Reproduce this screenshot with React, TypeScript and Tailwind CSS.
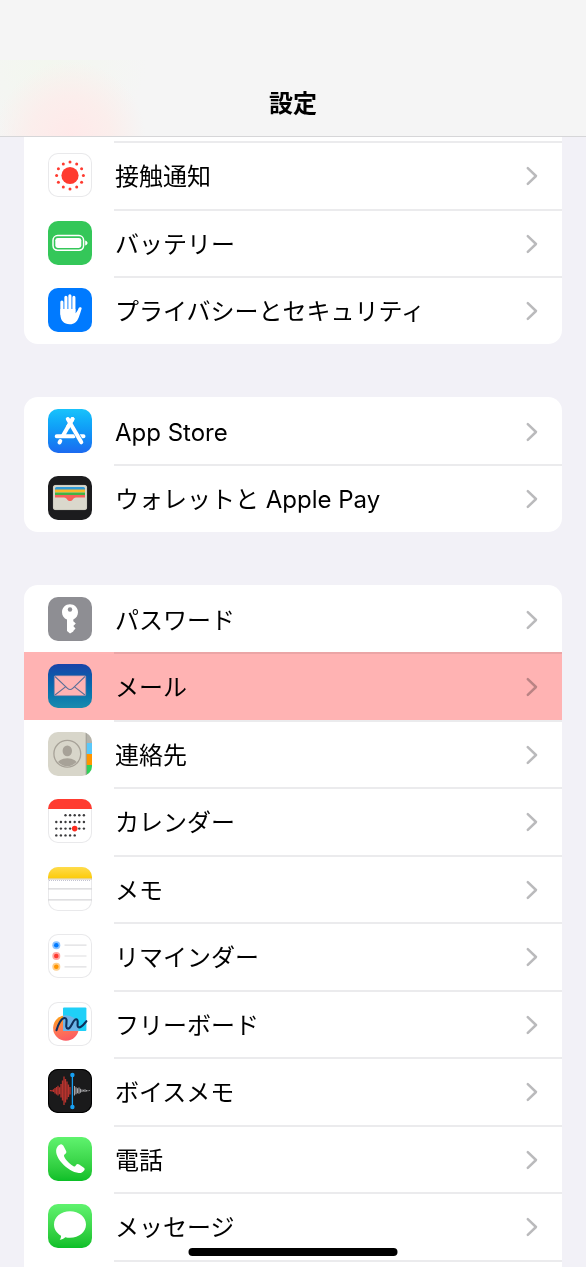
// App.tsx
import React from 'react';

interface SettingsItem {
    label: string;
    icon: React.ReactNode;
    highlighted?: boolean;
}

interface TileProps {
    className: string;
    children: React.ReactNode;
}

const Tile: React.FC<TileProps> = ({ className, children }) => (
    <span className={`block size-11 shrink-0 overflow-hidden rounded-[10px] ${className}`}>
        <svg viewBox="0 0 44 44" className="block size-full" fill="none" aria-hidden="true">
            {children}
        </svg>
    </span>
);

// White tiles get a hairline so they don't vanish on the white card
const OUTLINE = 'bg-white ring-1 ring-inset ring-[#e9e9eb]';

const ExposureIcon = () => (
    <Tile className={OUTLINE}>
        <circle cx="22" cy="22.5" r="8.6" fill="#ff3b30" />
        {Array.from({ length: 12 }, (_, i) => {
            const angle = (i * Math.PI) / 6;
            return (
                <circle
                    key={i}
                    cx={22 + 13.4 * Math.cos(angle)}
                    cy={22.5 + 13.4 * Math.sin(angle)}
                    r="1.5"
                    fill="#ff3b30"
                />
            );
        })}
    </Tile>
);

const BatteryIcon = () => (
    <Tile className="bg-[#34c759]">
        <rect x="5" y="14.6" width="30.6" height="14.6" rx="4.6" stroke="#fff" strokeWidth="1.5" />
        <rect x="7.3" y="16.9" width="26" height="10" rx="2.4" fill="#fff" />
        <path d="M37.2 19.4c1.5.4 2.3 1.4 2.3 2.5s-.8 2.1-2.3 2.5z" fill="#fff" />
    </Tile>
);

const HandIcon = () => (
    <Tile className="bg-[#007aff]">
        <path
            d="M13.9 14v12M17.9 9.2V24M21.9 7.8V24M25.9 9.4V24"
            stroke="#fff"
            strokeWidth="3.1"
            strokeLinecap="round"
        />
        <path
            d="M12.4 21h15v4.2c1.5-1.2 2.4-3 3.2-5 .6-1.4 3.6-1.6 3 .6-.8 2.7-1.7 5.8-2.9 8.6-1.8 4.3-4.200 6.800-8.900 6.800-6 0-9.400-3.900-9.400-9.800z"
            fill="#fff"
        />
    </Tile>
);

const AppStoreIcon = () => (
    <Tile className="bg-linear-to-b from-[#19c3fb] to-[#1c6af0]">
        <g stroke="#fff" strokeWidth="4" strokeLinecap="round">
            <path d="M24.5 10 14.8 27" />
            <path d="M8.7 27.2h17M32 27.2h3.5" />
            <path d="M12.3 32 11.5 33.4" />
        </g>
        <path d="M20 10.2 33.3 33" stroke="#1f93f6" strokeWidth="5.2" />
        <path d="M19.8 10 33.3 33.3" stroke="#fff" strokeWidth="4" strokeLinecap="round" />
        <path d="M24.5 10 20 18" stroke="#fff" strokeWidth="4" strokeLinecap="round" />
    </Tile>
);

const WalletIcon = () => (
    <Tile className="bg-[#1c1c1e]">
        <rect x="5" y="9" width="34" height="25" rx="2.5" fill="#dad8cc" />
        <path d="M7 12.5q0-1.5 1.5-1.5h27q1.5 0 1.5 1.5V14H7z" fill="#2f9bd8" />
        <path d="M7 13.6h30v3H7z" fill="#fcb72a" />
        <path d="M7 16.4h30v3H7z" fill="#41b445" />
        <path d="M7 19.1h30v2.3h-9c-1.8 0-2.5 1-3.2 2-1.4 2-4.2 2-5.6 0-.7-1-1.4-2-3.2-2H7z" fill="#f7605a" />
        <rect x="5.4" y="9.4" width="33.2" height="24.2" rx="2.2" stroke="#c9c7bc" strokeWidth="0.7" />
    </Tile>
);

const KeyIcon = () => (
    <Tile className="bg-[#8e8e93]">
        <path
            d="M22 7.3c4.5 0 8 3.4 8 7.9 0 3.3-1.900 6-4.700 7.200v1.900l2.500 2.300-2.500 2.500 2.200 2.500-2.200 2.500v.5L22 36.600l-3-2.700V22.600c-3-1.100-5-4-5-7.400 0-4.500 3.500-7.900 8-7.900z"
            fill="#fff"
        />
        <circle cx="22" cy="12.5" r="2.2" fill="#8e8e93" />
    </Tile>
);

const MailIcon = () => (
    <Tile className="bg-linear-to-b from-[#1a5ff0] to-[#1ac6f8]">
        <rect x="6.3" y="11.7" width="31.5" height="20" rx="1" fill="#fff" />
        <path
            d="M7 12.5 19.5 24.3c1.6 1.5 3.6 1.5 5.2 0L37 12.5M7 31l10.8-8.4M37 31l-10.8-8.4"
            stroke="#5c9ed8"
            strokeWidth="1.1"
        />
        <rect x="6.3" y="11.7" width="31.5" height="20" rx="1" stroke="#7fb4e8" strokeWidth="0.6" />
    </Tile>
);

const ContactsIcon = () => (
    <Tile className="bg-[#d8d6ca]">
        <clipPath id="contact-avatar">
            <circle cx="19.3" cy="21.8" r="12.3" />
        </clipPath>
        <circle cx="19.3" cy="21.8" r="13.4" stroke="#a7a298" strokeWidth="1.3" />
        <ellipse cx="19.3" cy="18.9" rx="4.7" ry="5.4" fill="#a7a298" />
        <ellipse cx="19.3" cy="33.3" rx="10.5" ry="7" fill="#a7a298" clipPath="url(#contact-avatar)" />
        <path d="M38.5 0H44v11h-5.5z" fill="#b4b2a9" />
        <path d="M38.5 11H44v11h-5.5z" fill="#5ac8fa" />
        <path d="M38.5 22H44v11h-5.5z" fill="#ff9500" />
        <path d="M38.5 33H44v11h-5.5z" fill="#30d158" />
        <path d="M38.2 0v44" stroke="#8d8b82" strokeWidth="0.8" />
    </Tile>
);

const CalendarIcon = () => {
    const rows = [
        { y: 16.2, from: 2, to: 6 },
        { y: 23, from: 0, to: 6 },
        { y: 29.6, from: 0, to: 6 },
        { y: 36.4, from: 0, to: 4 },
    ];

    return (
        <Tile className={OUTLINE}>
            <path d="M0 0h44v10H0z" fill="#ff3b30" />
            {rows.map((row) =>
                Array.from({ length: row.to - row.from + 1 }, (_, i) => (
                    <circle key={`${row.y}-${i}`} cx={8.3 + (row.from + i) * 4.6} cy={row.y} r="1.2" fill="#3a3a3c" />
                ))
            )}
            <circle cx="26.7" cy="29.6" r="2.8" fill="#ff2d20" />
        </Tile>
    );
};

const NotesIcon = () => (
    <Tile className={OUTLINE}>
        <defs>
            <linearGradient id="notes-top" x1="0" y1="0" x2="0" y2="1">
                <stop stopColor="#ffdc4b" />
                <stop offset="1" stopColor="#fccb09" />
            </linearGradient>
        </defs>
        <path d="M0 0h44v11.5H0z" fill="url(#notes-top)" />
        <path d="M0 12h44" stroke="#c9b88a" strokeWidth="0.8" />
        <path d="M1 13.5h42" stroke="#c3c3d2" strokeWidth="1" strokeDasharray="1 1" />
        <path d="M0 21.9h44M0 32.9h44" stroke="#d5d5d7" strokeWidth="1.2" />
    </Tile>
);

const RemindersIcon = () => (
    <Tile className={OUTLINE}>
        {[
            { y: 11.2, color: '#007aff' },
            { y: 22, color: '#ff3b30' },
            { y: 32.8, color: '#ff9500' },
        ].map(({ y, color }) => (
            <g key={color}>
                <circle cx="8.3" cy={y} r="4" fill={color} opacity="0.45" />
                <circle cx="8.3" cy={y} r="2.3" fill={color} />
                <path d={`M16.5 ${y}h22`} stroke="#dedee0" strokeWidth="1.2" />
            </g>
        ))}
    </Tile>
);

const FreeformIcon = () => (
    <Tile className={OUTLINE}>
        <defs>
            <linearGradient id="freeform-ball" x1="0.2" y1="0" x2="0.5" y2="1">
                <stop stopColor="#ffa412" />
                <stop offset="0.5" stopColor="#ff7b52" />
                <stop offset="1" stopColor="#fb5b63" />
            </linearGradient>
            <clipPath id="freeform-square">
                <rect x="15" y="5.5" width="23.4" height="23.5" rx="1" />
            </clipPath>
        </defs>
        <circle cx="17.9" cy="26" r="12.8" fill="url(#freeform-ball)" />
        <rect x="15" y="5.5" width="23.4" height="23.5" rx="1" fill="#1fd0f8" />
        <circle cx="17.9" cy="26" r="12.8" fill="#6db4e8" clipPath="url(#freeform-square)" />
        <path
            d="M8.5 28.2C10 22.5 13.3 16 16.8 16c4.2 0-1 10.6 3.2 10.6 3.5 0 4.8-9.8 8.4-9.3 3.2.5-.7 7.9 2.6 8.1 2.6.1 4.8-3.200 7.400-6.200"
            stroke="#0e2f5c"
            strokeWidth="2.1"
            strokeLinecap="round"
        />
    </Tile>
);

const VoiceMemosIcon = () => (
    <Tile className="bg-[#1a1a1b] ring-1 ring-inset ring-black">
        <path
            d="M2.5 21.1v1.2M4 21v1.6M5.5 20.3v2.8M7 19v5.4M8.5 18v7.6M10 16.8v9.8M11.5 18.2v7M13 15v13.4M14.5 11.5v20M16 7.5v28.5M17.5 10v23.500M19 12.500v18M20.500 15.500v12.500M22 18v7.500"
            stroke="#b8332e"
            strokeWidth="1.3"
        />
        <path
            d="M26.5 17v9.5M28 18.2v7M29.5 19.3v5M31 18.6v6.2M32.5 19.7v4M34 20.4v2.6M35.5 20.8v1.8M37 20.3v2.8M38.5 21v1.4M40 21.2v1M41.5 21.3v.8"
            stroke="#a5a5a8"
            strokeWidth="1.1"
        />
        <path d="M24.4 6v32" stroke="#17a0f2" strokeWidth="1.3" />
        <circle cx="24.4" cy="6" r="2.2" fill="#17a0f2" />
        <circle cx="24.4" cy="38" r="2.2" fill="#17a0f2" />
    </Tile>
);

const PhoneIcon = () => (
    <Tile className="bg-linear-to-b from-[#5ff36e] to-[#0abf27]">
        <path
            d="M9 10.5c.9-1.6 2.6-2.9 3.8-3.2 1.2-.3 2.2.7 3 2.2l2.2 4.3c.8 1.600.2 2.600-1.100 3.500-1.100.8-1.100 1.700-.4 3 1.200 2.200 3 4.300 5.200 6.200 1.200 1.100 2.500 2 3.800 2.700 1 .5 1.600.3 2.200-.6 1-1.600 2.100-1.900 3.500-1l4.300 2.800c1.500 1 1.500 2.100.4 3.300-1.300 1.600-3 2.500-5.200 2.300-5.600-.5-12.200-4.600-16.800-9.900-4.800-5.500-7.200-11.700-4.900-15.600z"
            fill="#fff"
        />
    </Tile>
);

const MessagesIcon = () => (
    <Tile className="bg-linear-to-b from-[#5ff36e] to-[#0abf27]">
        <path
            d="M22 7.2c8.9 0 16 5.9 16 13.3s-7.1 13.3-16 13.3c-1.6 0-3.2-.2-4.7-.6-1.5 1.4-3.6 2.4-5.6 2.5.9-1 1.4-2.500 1.300-4C8.800 29.200 6 25.200 6 20.500 6 13.100 13.100 7.200 22 7.200z"
            fill="#fff"
        />
    </Tile>
);

const generalItems: SettingsItem[] = [
    { label: '接触通知', icon: <ExposureIcon /> },
    { label: 'バッテリー', icon: <BatteryIcon /> },
    { label: 'プライバシーとセキュリティ', icon: <HandIcon /> },
];

const storeItems: SettingsItem[] = [
    { label: 'App Store', icon: <AppStoreIcon /> },
    { label: 'ウォレットと Apple Pay', icon: <WalletIcon /> },
];

const appItems: SettingsItem[] = [
    { label: 'パスワード', icon: <KeyIcon /> },
    { label: 'メール', icon: <MailIcon />, highlighted: true },
    { label: '連絡先', icon: <ContactsIcon /> },
    { label: 'カレンダー', icon: <CalendarIcon /> },
    { label: 'メモ', icon: <NotesIcon /> },
    { label: 'リマインダー', icon: <RemindersIcon /> },
    { label: 'フリーボード', icon: <FreeformIcon /> },
    { label: 'ボイスメモ', icon: <VoiceMemosIcon /> },
    { label: '電話', icon: <PhoneIcon /> },
    { label: 'メッセージ', icon: <MessagesIcon /> },
];

const Chevron = () => (
    <svg viewBox="0 0 12 20" className="h-5 w-3 shrink-0" fill="none" aria-hidden="true">
        <path
            d="M1.8 2.2 10 10l-8.2 7.8"
            stroke="#bababc"
            strokeWidth="2.5"
            strokeLinecap="round"
            strokeLinejoin="round"
        />
    </svg>
);

const SettingsRow: React.FC<{ item: SettingsItem; divider: boolean }> = ({ item, divider }) => (
    <li className="relative odd:h-[67px] even:h-[68px]">
        <a href="#" className="flex h-full items-center gap-[22px] pl-6">
            {item.icon}
            <span
                className={`flex h-full min-w-0 flex-1 items-center justify-between border-t-2 pr-6 ${
                    divider ? 'border-[#ebebed]' : 'border-transparent'
                }`}
            >
                <span className="pt-0.5 pl-px text-2xl whitespace-nowrap">{item.label}</span>
                <Chevron />
            </span>
        </a>
        {item.highlighted && (
            <span className="pointer-events-none absolute inset-0 bg-[#ffb3b3] mix-blend-multiply" />
        )}
    </li>
);

interface SettingsGroupProps {
    items: SettingsItem[];
    continuesAbove?: boolean;
    continuesBelow?: boolean;
}

const SettingsGroup: React.FC<SettingsGroupProps> = ({ items, continuesAbove, continuesBelow }) => (
    <ul
        className={`mx-6 bg-white ${continuesAbove ? '' : 'rounded-t-[14px]'} ${
            continuesBelow ? '' : 'rounded-b-[14px]'
        }`}
    >
        {continuesAbove && <li className="h-1" aria-hidden="true" />}
        {items.map((item, index) => (
            <SettingsRow key={item.label} item={item} divider={index > 0 || !!continuesAbove} />
        ))}
        {continuesBelow && (
            <li className="h-[7px] pl-[90px]" aria-hidden="true">
                <div className="border-t-2 border-[#ebebed]" />
            </li>
        )}
    </ul>
);

export default function App() {
    return (
        <div className="relative bg-[#f2f1f7] font-[Inter,'Noto_Sans_CJK_JP',sans-serif] text-black">
            <header className="border-b border-[#d6d6d8] bg-[#f5f5f5] pt-[60px]">
                <div className="flex h-[76px] items-center justify-center bg-[radial-gradient(circle_at_12%_100%,#ffe9e9_0,#fbeeec_40px,transparent_75px),radial-gradient(circle_at_8%_0%,#f3f7ef_0,transparent_100px)] pt-3">
                    <h1 className="text-2xl font-bold">設定</h1>
                </div>
            </header>
            <main className="flex flex-col gap-[53px]">
                <SettingsGroup items={generalItems} continuesAbove />
                <SettingsGroup items={storeItems} />
                <SettingsGroup items={appItems} continuesBelow />
            </main>
            <div className="absolute bottom-[11px] left-1/2 h-2 w-[209px] -translate-x-1/2 rounded-full bg-black" />
        </div>
    );
}
